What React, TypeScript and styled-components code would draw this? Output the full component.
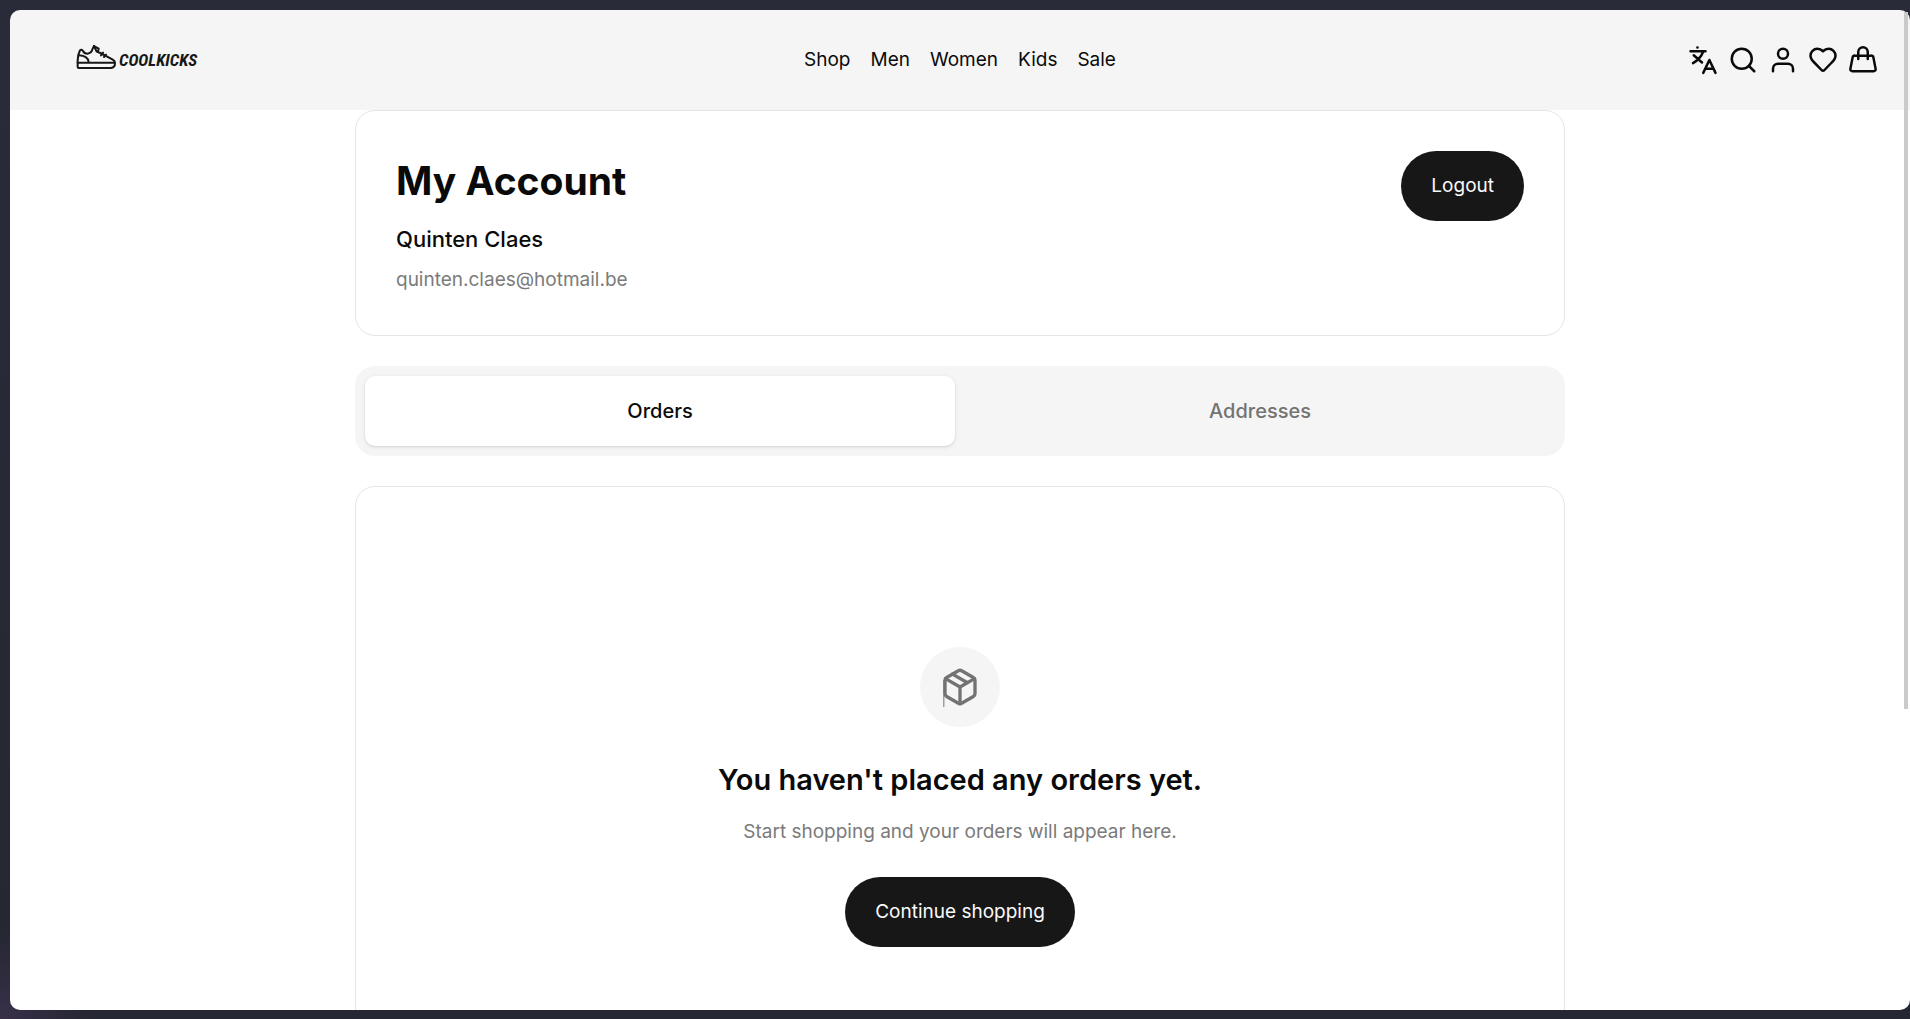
import React, { useState } from "react";
import styled, { createGlobalStyle } from "styled-components";

const GlobalStyle = createGlobalStyle`
  *, *::before, *::after { box-sizing: border-box; }
  body {
    margin: 0;
    font-family: Inter, "Liberation Sans", sans-serif;
    font-size: 19px;
    line-height: 30px;
    font-weight: 400;
    color: #0a0a0a;
  }
  h1, h2, p { margin: 0; }
`;

const Desktop = styled.div`
  position: relative;
  display: flex;
  height: 100vh;
  padding: 10px 0 9px 10px;
  background: radial-gradient(circle at 0 100%, #383049 0, transparent 90px),
    linear-gradient(#2a2b39, #252732);
`;

const BrowserWindow = styled.div`
  flex: 1;
  overflow-y: auto;
  scrollbar-width: none;
  border-radius: 10px;
  background: #fff;
`;

const ScrollThumb = styled.div`
  position: absolute;
  top: 12px;
  right: 2px;
  width: 4px;
  height: calc(70% - 16px);
  background: #cacaca;
`;

const Header = styled.header`
  display: grid;
  grid-template-columns: 1fr auto 1fr;
  align-items: center;
  padding: 35px 32px;
  background: #f5f5f5;
`;

const Logo = styled.a`
  display: flex;
  align-items: center;
  justify-self: start;
  gap: 2px;
  margin-left: 34px;
  color: #171717;
  text-decoration: none;
  font: italic 700 17px/24px "Roboto Condensed", "Open Sans Condensed", "Liberation Sans Narrow", sans-serif;
`;

const Nav = styled.nav`
  display: flex;
  gap: 20px;
`;

const NavLink = styled.a`
  color: inherit;
  text-decoration: none;
`;

const Actions = styled.div`
  display: flex;
  justify-self: end;
  gap: 10px;
`;

const IconButton = styled.button`
  display: flex;
  padding: 0;
  border: 0;
  background: none;
  color: inherit;
  cursor: pointer;
`;

const Stroke = styled.svg<{ $weight?: number }>`
  display: block;
  fill: none;
  stroke: currentColor;
  stroke-width: ${(p) => p.$weight ?? 2};
  stroke-linecap: round;
  stroke-linejoin: round;
`;

const Main = styled.main`
  display: flex;
  flex-direction: column;
  gap: 30px;
  max-width: 1210px;
  margin: 0 auto;
`;

const Card = styled.section`
  border: 1px solid #e5e5e5;
  border-radius: 20px;
  background: #fff;
`;

const ProfileCard = styled(Card)`
  display: flex;
  justify-content: space-between;
  align-items: flex-start;
  padding: 40px;
`;

const Title = styled.h1`
  margin-bottom: 10px;
  font-size: 39px;
  line-height: 60px;
  font-weight: 700;
`;

const Name = styled.p`
  margin-bottom: 8px;
  font-size: 22px;
  line-height: 36px;
  font-weight: 500;
`;

const Muted = styled.p`
  color: #7b7b7b;
`;

const PillButton = styled.button`
  padding: 20px 30px;
  border: 0;
  border-radius: 35px;
  background: #171717;
  color: #fafafa;
  font: inherit;
  cursor: pointer;
`;

const Tabs = styled.div`
  display: grid;
  grid-template-columns: 1fr 1fr;
  gap: 10px;
  padding: 10px;
  border-radius: 20px;
  background: #f5f5f5;
`;

const Tab = styled.button<{ $active: boolean }>`
  padding: 20px;
  border: 0;
  border-radius: 10px;
  background: ${(p) => (p.$active ? "#fff" : "transparent")};
  box-shadow: ${(p) => (p.$active ? "0 1px 4px rgba(0,0,0,.1), 0 1px 2px rgba(0,0,0,.06)" : "none")};
  color: ${(p) => (p.$active ? "#0a0a0a" : "#737373")};
  font: inherit;
  font-size: 20px;
  font-weight: 500;
  cursor: pointer;
`;

const EmptyCard = styled(Card)`
  display: flex;
  flex-direction: column;
  align-items: center;
  padding: 160px 40px;
  text-align: center;
`;

const IconCircle = styled.div`
  display: grid;
  place-items: center;
  width: 80px;
  height: 80px;
  margin-bottom: 30px;
  border-radius: 50%;
  background: #f5f5f5;
  color: #737373;
`;

const EmptyTitle = styled.h2`
  margin-bottom: 15px;
  font-size: 29px;
  line-height: 45px;
  font-weight: 600;
`;

const EmptyText = styled(Muted)`
  margin-bottom: 30px;
`;

const Icon = ({ children }: { children: React.ReactNode }) => (
  <Stroke width="30" height="30" viewBox="0 0 24 24" aria-hidden="true">
    {children}
  </Stroke>
);

const Shoe = () => (
  <Stroke $weight={6} width="41" height="30" viewBox="0 0 123 90" aria-hidden="true">
    <path d="M5 53H117M5 53V66Q5 69 8 69H105Q117 68 117 55Q117 47 109 43L73 24L62 20L54 3L68 11L66 19" />
    <path d="M5 53Q4 31 12 16Q16 11 21 18Q25 26 34 26Q47 24 49 13L54 3" />
    <path d="M9 31Q36 33 38 51" />
    <path d="M75 31L81 23M84 36L90 29" />
  </Stroke>
);

const actions = [
  {
    label: "Language",
    icon: (
      <Icon>
        <path d="M7.5 1.9h.1M2 5h12M12 5.6Q10 11 4 14.5M4.6 8.2 11.2 14M12.2 22.3 17.1 12l4.9 10.3M14 19h6.3" />
      </Icon>
    ),
  },
  {
    label: "Search",
    icon: (
      <Icon>
        <circle cx="11" cy="11" r="8" />
        <path d="m21 21-4.3-4.3" />
      </Icon>
    ),
  },
  {
    label: "Account",
    icon: (
      <Icon>
        <circle cx="12" cy="7" r="4" />
        <path d="M4 21v-2a4 4 0 0 1 4-4h8a4 4 0 0 1 4 4v2" />
      </Icon>
    ),
  },
  {
    label: "Wishlist",
    icon: (
      <Icon>
        <path d="M19 14c1.5-1.5 3-3.2 3-5.5A5.5 5.5 0 0 0 16.5 3c-1.8 0-3 .5-4.5 2-1.5-1.5-2.7-2-4.5-2A5.5 5.5 0 0 0 2 8.5c0 2.3 1.5 4 3 5.5l6 6.2q1 .8 2 0Z" />
      </Icon>
    ),
  },
  {
    label: "Bag",
    icon: (
      <Icon>
        <path d="M5.5 8.5h13a1.8 1.8 0 0 1 1.8 1.4l1.8 9.2a1.6 1.6 0 0 1-1.6 1.9h-17a1.6 1.6 0 0 1-1.6-1.9l1.8-9.2a1.8 1.8 0 0 1 1.8-1.4Z" />
        <path d="M8.2 11.2V5.6a3.8 3.8 0 0 1 7.6 0v5.6" />
      </Icon>
    ),
  },
];

export default function App() {
  const [tab, setTab] = useState("Orders");
  return (
    <>
      <GlobalStyle />
      <Desktop>
        <BrowserWindow>
          <Header>
            <Logo href="#home">
              <Shoe />
              <span>COOLKICKS</span>
            </Logo>
            <Nav>
              {["Shop", "Men", "Women", "Kids", "Sale"].map((item) => (
                <NavLink key={item} href={`#${item.toLowerCase()}`}>
                  {item}
                </NavLink>
              ))}
            </Nav>
            <Actions>
              {actions.map((a) => (
                <IconButton key={a.label} aria-label={a.label}>
                  {a.icon}
                </IconButton>
              ))}
            </Actions>
          </Header>
          <Main>
            <ProfileCard>
              <div>
                <Title>My Account</Title>
                <Name>Quinten Claes</Name>
                <Muted>quinten.claes@hotmail.be</Muted>
              </div>
              <PillButton>Logout</PillButton>
            </ProfileCard>
            <Tabs role="tablist">
              {["Orders", "Addresses"].map((t) => (
                <Tab key={t} role="tab" aria-selected={tab === t} $active={tab === t} onClick={() => setTab(t)}>
                  {t}
                </Tab>
              ))}
            </Tabs>
            <EmptyCard>
              <IconCircle>
                <Stroke width="40" height="40" viewBox="0 0 24 24" aria-hidden="true">
                  <path d="M11 21.73a2 2 0 0 0 2 0l7-4A2 2 0 0 0 21 16V8a2 2 0 0 0-1-1.73l-7-4a2 2 0 0 0-2 0l-7 4A2 2 0 0 0 3 8v8a2 2 0 0 0 1 1.73z" />
                  <path d="M12 22V12M3.29 7 12 12l8.71-5M7.5 4.27l9 5.15" />
                  <path d="M2 8h.6v16H2z" fill="currentColor" stroke="none" />
                </Stroke>
              </IconCircle>
              <EmptyTitle>You haven't placed any orders yet.</EmptyTitle>
              <EmptyText>Start shopping and your orders will appear here.</EmptyText>
              <PillButton>Continue shopping</PillButton>
            </EmptyCard>
          </Main>
        </BrowserWindow>
        <ScrollThumb />
      </Desktop>
    </>
  );
}
